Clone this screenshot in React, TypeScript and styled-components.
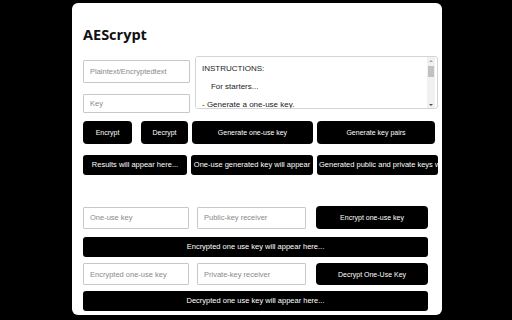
import React from "react";
import styled, { createGlobalStyle } from "styled-components";

const GlobalStyle = createGlobalStyle`
  html, body {
    margin: 0;
    padding: 0;
    background: #000;
    font-family: "Liberation Sans", Arial, sans-serif;
  }
`;

const Page = styled.div`
  width: 512px;
  height: 320px;
  display: flex;
  justify-content: center;
  padding-top: 3px;
  box-sizing: border-box;
`;

const Card = styled.main`
  width: 370px;
  height: 312px;
  margin-left: 2px;
  background: #fff;
  border-radius: 6px;
  padding: 0 0 0 11px;
  box-sizing: border-box;
`;

const Title = styled.h1`
  margin: 0;
  padding-top: 22px;
  height: 53px;
  box-sizing: border-box;
  font-family: "Open Sans", sans-serif;
  font-weight: 700;
  font-size: 14.5px;
  line-height: 20px;
  color: #111;
`;

const Top = styled.div`
  display: flex;
  gap: 5px;
`;

const LeftCol = styled.div`
  display: flex;
  flex-direction: column;
  padding-top: 4px;
  gap: 11px;
`;

const Field = styled.input<{ $w: number; $h: number }>`
  width: ${(p) => p.$w}px;
  height: ${(p) => p.$h}px;
  box-sizing: border-box;
  border: 1px solid #c8c8c8;
  border-radius: 1px;
  padding: 0 6px;
  font-family: "Liberation Sans", Arial, sans-serif;
  font-size: 7.5px;
  color: #333;
  outline: none;
  &::placeholder {
    color: #8a8a8a;
  }
`;

const InstructionsBox = styled.div`
  width: 243px;
  height: 53px;
  box-sizing: border-box;
  border: 1px solid #d4d4d4;
  border-radius: 3px;
  display: flex;
  overflow: hidden;
`;

const Instructions = styled.textarea`
  flex: 1;
  border: none;
  padding: 7px 6px 0;
  font-family: "Liberation Sans", Arial, sans-serif;
  font-size: 8px;
  line-height: 9px;
  color: #222;
  resize: none;
  overflow: hidden;
  outline: none;
`;

const ScrollTrack = styled.div`
  width: 8px;
  margin-right: 2px;
  background: #f1f1f1;
  display: flex;
  flex-direction: column;
  align-items: center;
  padding: 3px 0 2px;
  box-sizing: border-box;
`;

const Arrow = styled.div<{ $down?: boolean }>`
  width: 0;
  height: 0;
  border-left: 2px solid transparent;
  border-right: 2px solid transparent;
  ${(p) => (p.$down ? "border-top: 2px solid #505050;" : "border-bottom: 2px solid #a3a3a3;")}
  ${(p) => (p.$down ? "margin-top: auto;" : "")}
`;

const Thumb = styled.div`
  width: 6px;
  height: 11px;
  margin-top: 4px;
  background: #c1c1c1;
`;

const ButtonRow = styled.div<{ $top: number }>`
  display: flex;
  gap: 4px;
  margin-top: ${(p) => p.$top}px;
`;

const Btn = styled.button<{ $w: number; $h: number; $ml?: number }>`
  width: ${(p) => p.$w}px;
  height: ${(p) => p.$h}px;
  margin-left: ${(p) => p.$ml ?? 0}px;
  flex-shrink: 0;
  background: #000;
  color: #fff;
  border: none;
  border-radius: 4px;
  font-family: "Liberation Sans", Arial, sans-serif;
  font-size: 7px;
  padding: 0;
  cursor: pointer;
`;

const Result = styled.div<{ $w: number }>`
  width: ${(p) => p.$w}px;
  height: 20px;
  flex-shrink: 0;
  box-sizing: border-box;
  background: #000;
  color: #fff;
  border-radius: 3px;
  padding: 0 2px;
  font-size: 7.5px;
  line-height: 20px;
  text-align: center;
  white-space: nowrap;
  overflow: hidden;
`;

const KeyRow = styled.div<{ $top: number }>`
  display: flex;
  align-items: center;
  gap: 8px;
  margin-top: ${(p) => p.$top}px;
`;

const Bar = styled.div<{ $top: number }>`
  width: 345px;
  height: 20px;
  margin-top: ${(p) => p.$top}px;
  background: #000;
  color: #fff;
  border-radius: 3px;
  font-size: 7.5px;
  line-height: 20px;
  text-align: center;
`;

export default function App() {
  return (
    <>
      <GlobalStyle />
      <Page>
        <Card>
          <Title>AEScrypt</Title>
          <Top>
            <LeftCol>
              <Field $w={107} $h={23} placeholder="Plaintext/Encryptedtext" />
              <Field $w={107} $h={19} placeholder="Key" />
            </LeftCol>
            <InstructionsBox>
              <Instructions
                readOnly
                defaultValue={
                  "INSTRUCTIONS:\n\n    For starters...\n\n- Generate a one-use key.\n\n- Generate key pairs.\n\n- Encrypt the one-use key."
                }
              />
              <ScrollTrack>
                <Arrow />
                <Thumb />
                <Arrow $down />
              </ScrollTrack>
            </InstructionsBox>
          </Top>
          <ButtonRow $top={8}>
            <Btn $w={49} $h={23}>Encrypt</Btn>
            <Btn $w={47} $h={23} $ml={5}>Decrypt</Btn>
            <Btn $w={121} $h={23}>Generate one-use key</Btn>
            <Btn $w={118} $h={23}>Generate key pairs</Btn>
          </ButtonRow>
          <ButtonRow $top={11}>
            <Result $w={104}>Results will appear here...</Result>
            <Result $w={122}>One-use generated key will appear</Result>
            <Result $w={121}>Generated public and private keys w</Result>
          </ButtonRow>
          <KeyRow $top={31}>
            <Field $w={106} $h={22} placeholder="One-use key" />
            <Field $w={109} $h={22} placeholder="Public-key receiver" />
            <Btn $w={112} $h={23} $ml={2}>Encrypt one-use key</Btn>
          </KeyRow>
          <Bar $top={8}>Encrypted one use key will appear here...</Bar>
          <KeyRow $top={6}>
            <Field $w={106} $h={22} placeholder="Encrypted one-use key" />
            <Field $w={109} $h={22} placeholder="Private-key receiver" />
            <Btn $w={112} $h={22} $ml={2}>Decrypt One-Use Key</Btn>
          </KeyRow>
          <Bar $top={6}>Decrypted one use key will appear here...</Bar>
        </Card>
      </Page>
    </>
  );
}
